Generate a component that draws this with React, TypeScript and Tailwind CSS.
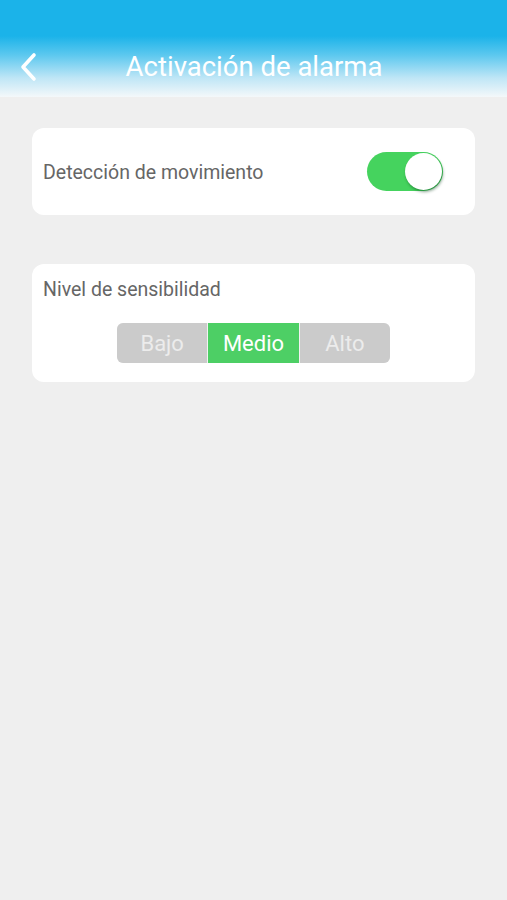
import React, { useState } from 'react';

const LEVELS = ['Bajo', 'Medio', 'Alto'];

export default function App() {
    const [motion, setMotion] = useState(true);
    const [level, setLevel] = useState('Medio');

    return (
        <div className="min-h-[900px] w-full bg-[#efefef] font-['Roboto',sans-serif]">
            {/* Header */}
            <div className="h-[97px] bg-[linear-gradient(to_bottom,#1bb3e9_0px,#1bb3e9_36px,#5cc8ef_55px,#bfe6f6_78px,#f4f8fa_97px)] pt-[48px]">
                <div className="relative flex items-center h-[38px]">
                    <button className="absolute left-[18px] top-[4px] text-white">
                        <svg width="22" height="30" viewBox="0 0 22 30" fill="none">
                            <path d="M16 3 L5 15 L16 27" stroke="white" strokeWidth="3.6" strokeLinecap="round" strokeLinejoin="round" />
                        </svg>
                    </button>
                    <h1 className="w-full text-center text-white text-[27.5px] leading-none pl-[1px]">Activación de alarma</h1>
                </div>
            </div>

            <div className="px-[32px] pt-[31px] flex flex-col gap-[49px]">
                {/* Motion detection */}
                <div className="bg-white rounded-[12px] h-[87px] pl-[11px] pr-[32px] flex items-center justify-between">
                    <span className="text-[19.5px] text-[#666666] pt-[2px]">Detección de movimiento</span>
                    <button
                        onClick={() => setMotion(!motion)}
                        className={`relative w-[76px] h-[39px] rounded-full transition-colors ${motion ? 'bg-[#45d35e]' : 'bg-[#dcdcdc]'}`}
                    >
                        <span
                            className={`absolute top-[1px] w-[37px] h-[37px] rounded-full bg-white shadow-[1px_2px_3px_rgba(0,60,20,0.45)] transition-all ${motion ? 'left-[38px]' : 'left-[1px]'}`}
                        />
                    </button>
                </div>

                {/* Sensitivity */}
                <div className="bg-white rounded-[12px] h-[118px] px-[11px] pt-[14px]">
                    <p className="text-[19.5px] text-[#666666] leading-[24px]">Nivel de sensibilidad</p>
                    <div className="flex justify-center mt-[21px]">
                        <div className="flex w-[273px] h-[40px] rounded-[6px] overflow-hidden bg-[#f2f2f2] gap-[1px]">
                            {LEVELS.map((l) => (
                                <button
                                    key={l}
                                    onClick={() => setLevel(l)}
                                    className={`flex-1 flex items-center justify-center text-[22px] ${level === l ? 'bg-[#4dcf65] text-white' : 'bg-[#cbcbcb] text-[#ececec]'}`}
                                >
                                    {l}
                                </button>
                            ))}
                        </div>
                    </div>
                </div>
            </div>
        </div>
    );
}
